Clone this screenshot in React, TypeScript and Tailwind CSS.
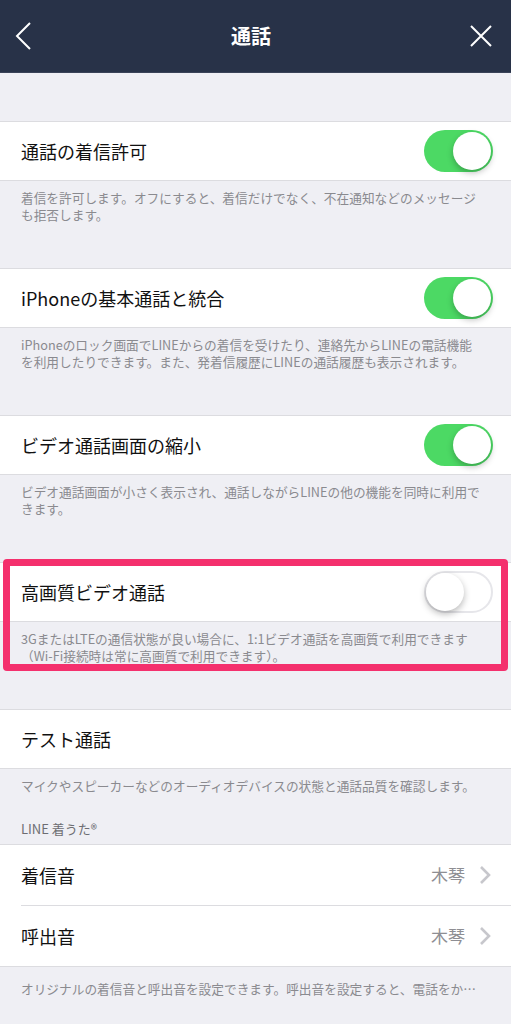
import React from "react";

const Toggle = ({ on }: { on: boolean }) => {
  if (on) {
    return (
      <div className="w-[69px] h-[42px] rounded-full bg-[#4cd964] flex items-center justify-end pr-[2px]">
        <div className="w-[38px] h-[38px] rounded-full bg-white shadow-[0_3px_6px_rgba(0,0,0,0.25)]" />
      </div>
    );
  }
  return (
    <div className="w-[69px] h-[42px] rounded-full bg-white border-2 border-[#e6e6ea] flex items-center justify-start">
      <div className="w-[38px] h-[38px] rounded-full bg-white shadow-[0_3px_7px_rgba(0,0,0,0.28)]" />
    </div>
  );
};

const Desc = ({ lines, className = "" }: { lines: string[]; className?: string }) => (
  <div className={`px-[21px] text-[12.7px] leading-[17px] text-[#8a8a8f] ${className}`}>
    {lines.map((l) => (
      <p key={l} className="whitespace-nowrap">
        {l}
      </p>
    ))}
  </div>
);

const ToggleRow = ({ title, on }: { title: string; on: boolean }) => (
  <div className="h-[60px] bg-white border-y border-[#dcdce0] flex items-center justify-between pl-[21px] pr-[18px]">
    <span className="text-[18px] text-[#111]">{title}</span>
    <Toggle on={on} />
  </div>
);

const Chevron = () => (
  <svg width="12" height="20" viewBox="0 0 12 20" fill="none">
    <path d="M2 2 L10 10 L2 18" stroke="#c7c7cc" strokeWidth="2.6" />
  </svg>
);

const ValueRow = ({ title, value }: { title: string; value: string }) => (
  <div className="h-[60px] flex items-center justify-between pr-[20px]">
    <span className="text-[18px] text-[#111]">{title}</span>
    <div className="flex items-center gap-[14px]">
      <span className="text-[17px] text-[#8e8e93]">{value}</span>
      <Chevron />
    </div>
  </div>
);

const toggles = [
  {
    title: "通話の着信許可",
    on: true,
    desc: ["着信を許可します。オフにすると、着信だけでなく、不在通知などのメッセージ", "も拒否します。"],
  },
  {
    title: "iPhoneの基本通話と統合",
    on: true,
    desc: [
      "iPhoneのロック画面でLINEからの着信を受けたり、連絡先からLINEの電話機能",
      "を利用したりできます。また、発着信履歴にLINEの通話履歴も表示されます。",
    ],
  },
  {
    title: "ビデオ通話画面の縮小",
    on: true,
    desc: ["ビデオ通話画面が小さく表示され、通話しながらLINEの他の機能を同時に利用で", "きます。"],
  },
];

export default function App() {
  return (
    <div
      className="w-[511px] min-h-[1024px] bg-[#efeff4] overflow-hidden"
      style={{ fontFamily: '"Noto Sans CJK JP", "Noto Sans", sans-serif' }}
    >
      <header className="h-[73px] bg-[#283248] border-b border-[#3a4358] flex items-center justify-between px-[15px]">
        <svg width="18" height="30" viewBox="0 0 18 30" fill="none">
          <path d="M15 2 L2 15 L15 28" stroke="white" strokeWidth="2" />
        </svg>
        <h1 className="text-[20px] font-bold text-white">通話</h1>
        <svg width="24" height="24" viewBox="0 0 24 24" fill="none" className="mr-[3px]">
          <path d="M2 2 L22 22 M22 2 L2 22" stroke="white" strokeWidth="2" />
        </svg>
      </header>

      <div className="h-[48px]" />

      {toggles.map((t) => (
        <div key={t.title}>
          <ToggleRow title={t.title} on={t.on} />
          <Desc className="pt-[8px] pb-[45px]" lines={t.desc} />
        </div>
      ))}

      <div className="relative">
        <ToggleRow title="高画質ビデオ通話" on={false} />
        <Desc
          className="pt-[8px] pb-[45px]"
          lines={[
            "3GまたはLTEの通信状態が良い場合に、1:1ビデオ通話を高画質で利用できます",
            "（Wi-Fi接続時は常に高画質で利用できます）。",
          ]}
        />
        <div className="absolute left-[3px] right-[3px] top-[-3px] h-[112px] border-[7px] border-[#f4306d] rounded-[4px] pointer-events-none" />
      </div>

      <div className="h-[60px] bg-white border-y border-[#dcdce0] flex items-center pl-[21px]">
        <span className="text-[18px] text-[#111]">テスト通話</span>
      </div>
      <Desc className="pt-[8px]" lines={["マイクやスピーカーなどのオーディオデバイスの状態と通話品質を確認します。"]} />

      <p className="px-[21px] pt-[26px] pb-[7px] text-[13px] leading-[17px] text-[#6d6d72]">LINE 着うた®</p>

      <div className="bg-white border-y border-[#dcdce0] pl-[21px]">
        <ValueRow title="着信音" value="木琴" />
        <div className="border-t border-[#dcdce0]">
          <ValueRow title="呼出音" value="木琴" />
        </div>
      </div>
      <Desc className="pt-[13px]" lines={["オリジナルの着信音と呼出音を設定できます。呼出音を設定すると、電話をか…"]} />
    </div>
  );
}
